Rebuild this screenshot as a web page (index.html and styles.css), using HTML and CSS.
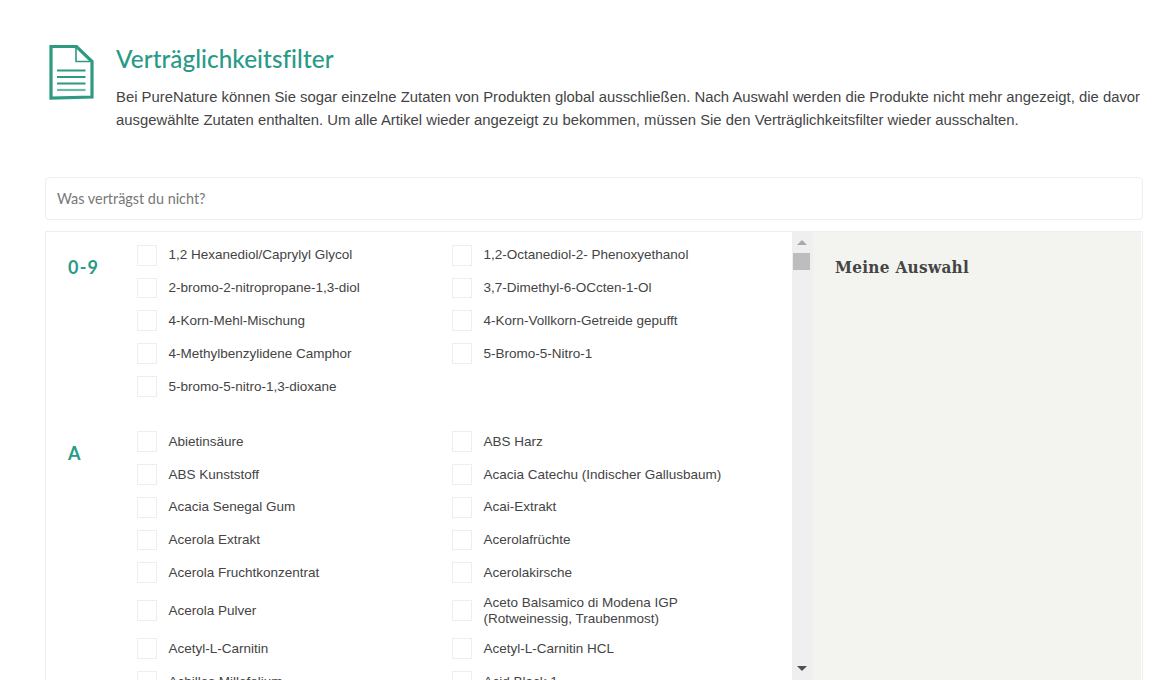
FILE: index.html
```html
<!DOCTYPE html>
<html lang="de">
<head>
<meta charset="utf-8">
<title>Verträglichkeitsfilter</title>
<link rel="stylesheet" href="styles.css">
</head>
<body>
<main class="page">
  <header class="intro">
    <svg class="intro-icon" width="48" height="56" viewBox="0 0 48 56" fill="none">
      <path d="M3 2.500H28.500L44 17.500V53L3 54Z" stroke="#2f9a82" stroke-width="3.200"/>
      <path d="M28 3V17.500H44" stroke="#2f9a82" stroke-width="1.600"/>
      <path d="M9 26.500H37.500M9 33H37.500M9 39.500H37.500" stroke="#2f9a82" stroke-width="2"/>
      <path d="M9 46H37.500" stroke="#2f9a82" stroke-width="2.200" opacity=".7"/>
    </svg>
    <div class="intro-text">
      <h1>Verträglichkeitsfilter</h1>
      <p>Bei PureNature können Sie sogar einzelne Zutaten von Produkten global ausschließen. Nach Auswahl werden die Produkte nicht mehr angezeigt, die davor ausgewählte Zutaten enthalten. Um alle Artikel wieder angezeigt zu bekommen, müssen Sie den Verträglichkeitsfilter wieder ausschalten.</p>
    </div>
  </header>

  <div class="search">Was verträgst du nicht?</div>

  <section class="panel">
    <div class="list">
      <div class="group">
        <div class="letter">0-9</div>
        <div class="items">
          <label class="item"><span class="box"></span><span>1,2 Hexanediol/Caprylyl Glycol</span></label>
          <label class="item"><span class="box"></span><span>1,2-Octanediol-2- Phenoxyethanol</span></label>
          <label class="item"><span class="box"></span><span>2-bromo-2-nitropropane-1,3-diol</span></label>
          <label class="item"><span class="box"></span><span>3,7-Dimethyl-6-OCcten-1-Ol</span></label>
          <label class="item"><span class="box"></span><span>4-Korn-Mehl-Mischung</span></label>
          <label class="item"><span class="box"></span><span>4-Korn-Vollkorn-Getreide gepufft</span></label>
          <label class="item"><span class="box"></span><span>4-Methylbenzylidene Camphor</span></label>
          <label class="item"><span class="box"></span><span>5-Bromo-5-Nitro-1</span></label>
          <label class="item"><span class="box"></span><span>5-bromo-5-nitro-1,3-dioxane</span></label>
        </div>
      </div>
      <div class="group">
        <div class="letter">A</div>
        <div class="items">
          <label class="item"><span class="box"></span><span>Abietinsäure</span></label>
          <label class="item"><span class="box"></span><span>ABS Harz</span></label>
          <label class="item"><span class="box"></span><span>ABS Kunststoff</span></label>
          <label class="item"><span class="box"></span><span>Acacia Catechu (Indischer Gallusbaum)</span></label>
          <label class="item"><span class="box"></span><span>Acacia Senegal Gum</span></label>
          <label class="item"><span class="box"></span><span>Acai-Extrakt</span></label>
          <label class="item"><span class="box"></span><span>Acerola Extrakt</span></label>
          <label class="item"><span class="box"></span><span>Acerolafrüchte</span></label>
          <label class="item"><span class="box"></span><span>Acerola Fruchtkonzentrat</span></label>
          <label class="item"><span class="box"></span><span>Acerolakirsche</span></label>
          <label class="item"><span class="box"></span><span>Acerola Pulver</span></label>
          <label class="item"><span class="box"></span><span>Aceto Balsamico di Modena IGP (Rotweinessig, Traubenmost)</span></label>
          <label class="item"><span class="box"></span><span>Acetyl-L-Carnitin</span></label>
          <label class="item"><span class="box"></span><span>Acetyl-L-Carnitin HCL</span></label>
          <label class="item"><span class="box"></span><span>Achilles Millefolium</span></label>
          <label class="item"><span class="box"></span><span>Acid Black 1</span></label>
        </div>
      </div>
    </div>
    <div class="scrollbar">
      <span class="arrow-up"></span>
      <span class="thumb"></span>
      <span class="arrow-down"></span>
    </div>
    <aside class="selection">
      <h2>Meine Auswahl</h2>
    </aside>
  </section>
</main>
</body>
</html>
```
FILE: styles.css
```css
* { box-sizing: border-box; }
html, body { margin: 0; height: 680px; overflow: hidden; background: #fff; }
body { font-family: "Liberation Sans", Arial, sans-serif; font-size: 13.500px; color: #444; }
.page { padding: 44px 31px 0 45px; }
.intro { display: flex; height: 133px; }
.intro-icon { margin: 0 0 0 3px; flex: none; }
.intro-text { margin-left: 20px; flex: 1; }
h1 { margin: 0 0 14px; padding-top: 2px; font: 500 24.300px/26px Lato, sans-serif; color: #2a9a88; letter-spacing: .05px; }
.intro-text p { margin: 0; font-size: 14.850px; line-height: 22.500px; }
.search { height: 43px; border: 1px solid #eee; border-radius: 4px; padding: 0 11px; font: 400 14.400px/41px Lato, sans-serif; color: #777; }
.panel { display: flex; margin-top: 11px; height: 460px; border: 1px solid #eee; overflow: hidden; }
.list { width: 746px; padding-top: 6.800px; flex: none; overflow: hidden; }
.group { display: flex; margin-bottom: 22.400px; }
.letter { width: 91px; padding: 18px 0 0 22px; font: 700 18px/20px Lato, sans-serif; color: #2a9a88; letter-spacing: 1.200px; flex: none; }
.items { flex: 1; display: grid; grid-template-columns: 315px 1fr; align-items: center; }
.item { display: flex; align-items: center; padding: 6px 40px 6px 0; line-height: 15.500px; }
.box { width: 20px; height: 20.800px; border: 1px solid #eee; margin-right: 11.500px; flex: none; }
.scrollbar { width: 21px; background: #efefef; display: flex; flex-direction: column; align-items: center; padding-top: 8px; flex: none; position: relative; }
.arrow-up { border: 5px solid transparent; border-top: 0; border-bottom-color: #a8a8a8; margin-right: 2px; }
.thumb { width: 17px; height: 17px; margin: 8px 2px 0 0; background: #bdbdbd; }
.arrow-down { position: absolute; top: 434px; left: 5px; border: 5px solid transparent; border-bottom: 0; border-top-color: #505050; }
.selection { flex: 1; background: #f3f3ef; border-right: 1px solid #fff; padding: 25px 22px; }
h2 { margin: 0; font: 700 17px/20px "DejaVu Serif", serif; font-stretch: condensed; color: #444; letter-spacing: .3px; }
```
